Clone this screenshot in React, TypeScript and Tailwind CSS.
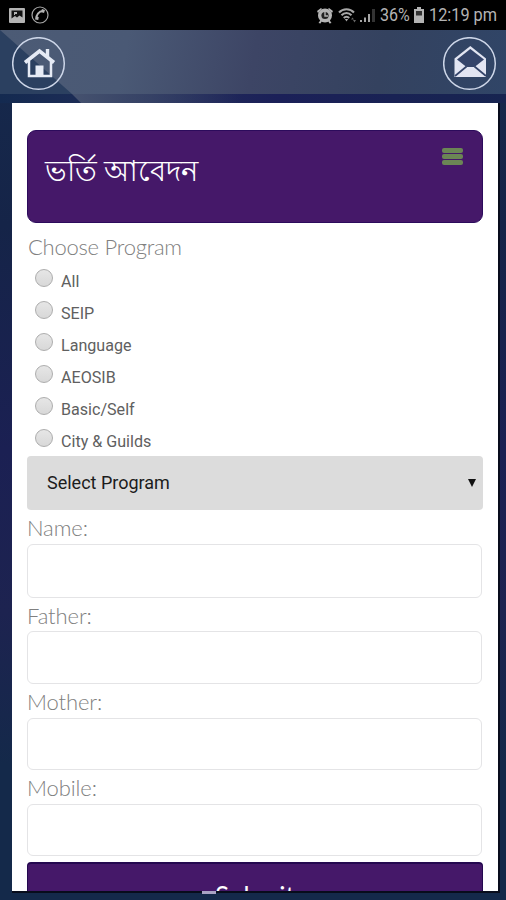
import { useState } from "react";

const programs = [
  "All",
  "SEIP",
  "Language",
  "AEOSIB",
  "Basic/Self",
  "City & Guilds",
];

const fields = [
  { label: "Name:", labelBox: "h-[34px] pt-[4px]", inputBox: "h-[54px]" },
  { label: "Father:", labelBox: "h-[33px] pt-[4px]", inputBox: "h-[53px]" },
  { label: "Mother:", labelBox: "h-[34px] pt-[4px]", inputBox: "h-[52px]" },
  { label: "Mobile:", labelBox: "h-[34px] pt-[4px]", inputBox: "h-[52px]" },
];

function StatusBar() {
  return (
    <div className="flex h-[30px] items-center justify-between bg-black pl-[9px] pr-[9px] text-[#b4b4b4]">
      <div className="flex items-center gap-[6px]">
        <svg width="16" height="15" viewBox="0 0 16 15">
          <rect width="16" height="15" rx="1" fill="#b4b4b4" />
          <path d="M2.500 2.500h11v7l-3-2-2.500 2-2-1.500-3.500 2.500z" fill="#111" />
          <path d="M5 4h3v2H6v1H5z" fill="#b4b4b4" />
        </svg>
        <svg width="18" height="18" viewBox="0 0 18 18" fill="none">
          <circle cx="9" cy="9" r="8" stroke="#a6a6a6" strokeWidth="1.200" />
          <path
            d="M5.500 13c-.8-4 2.500-7.800 6.500-8"
            stroke="#b4b4b4"
            strokeWidth="2"
          />
          <path d="M10.500 4.500l3 1M4.500 12l3 .5" stroke="#b4b4b4" strokeWidth="3" />
        </svg>
      </div>
      <div className="flex items-center">
        {/* alarm */}
        <svg width="16" height="17" viewBox="0 0 16 17" fill="#b4b4b4">
          <circle cx="8" cy="8.500" r="7" />
          <path d="M0 4l4-3 1 1-4 4zM16 4l-4-3-1 1 4 4zM1.500 16l2-3 1.500 1L3.500 16.500zM14.500 16l-2-3-1.500 1 1.500 2.500z" />
          <circle cx="8" cy="8.500" r="3.600" fill="#222" />
          <path d="M8 5v4h3" stroke="#b4b4b4" strokeWidth="1.400" fill="none" />
        </svg>
        {/* wifi */}
        <svg className="ml-[5px]" width="19" height="17" viewBox="0 0 19 17" fill="none">
          <g stroke="#a6a6a6" strokeWidth="2">
            <path d="M1 5.500c4-4.500 11-4.500 15 0" />
            <path d="M3.500 8.300c2.800-3 7.200-3 10 0" />
            <path d="M5.800 11c1.500-1.700 3.900-1.700 5.400 0" />
          </g>
          <path d="M6.800 12l1.700 2.500 1.700-2.500z" fill="#a6a6a6" />
          <path d="M13 12.500l1.500-2 1.500 2zM15 13l1.500 2.500 1.500-2.500z" fill="#666" />
        </svg>
        {/* signal */}
        <svg className="ml-[3px]" width="16" height="14" viewBox="0 0 16 14">
          <path d="M0 12h2v2H0zM4 9.500h2V14H4zM8 6h2v8H8z" fill="#a6a6a6" />
          <path d="M12 1h3v13h-3z" fill="#333" />
        </svg>
        <span className="ml-[4px] w-[30px] origin-left scale-x-[0.89] whitespace-nowrap text-[18px] leading-[30px]">
          36%
        </span>
        <svg className="ml-[4px]" width="10" height="16" viewBox="0 0 10 16">
          <path d="M3 0h4v2h3v14H0V2h3z" fill="#b4b4b4" />
          <path d="M2 4h6v4.500H2z" fill="#333" />
        </svg>
        <span className="ml-[5px] w-[68px] origin-left scale-x-[0.905] whitespace-nowrap text-[18px] leading-[30px]">
          12:19 pm
        </span>
      </div>
    </div>
  );
}

function Header() {
  return (
    <div className="relative h-[73px] bg-[linear-gradient(90deg,#142a50_0%,#222d5a_30%,#1b2058_55%,#172450_100%)]">
      <div className="h-[64px] bg-[linear-gradient(100deg,#4c5b75_0%,#4a5975_25%,#3d4565_50%,#34425f_75%,#304567_100%)]"></div>
      <svg className="absolute left-0 top-0" width="506" height="73" viewBox="0 0 506 73">
        <defs>
          <linearGradient id="glare" x1="0" x2="1" y1="0" y2="0">
            <stop offset="0" stopColor="#46526f" />
            <stop offset="1" stopColor="#46526f" stopOpacity="0" />
          </linearGradient>
        </defs>
        <path d="M0 0L72 64H0z" fill="#2b4060" />
        <path d="M72 64h170v9H81z" fill="url(#glare)" />
      </svg>
      <button className="absolute left-[12px] top-[7px]">
        <svg width="54" height="54" viewBox="0 0 54 54" fill="none">
          <circle cx="26.500" cy="26.500" r="25.800" stroke="#cdd6e8" strokeWidth="1.500" />
          <g stroke="#e6ebf5">
            <path d="M13 25.500L27.500 14L42 25.500" strokeWidth="3.600" />
            <path d="M17 24v15h22V24" strokeWidth="2.500" />
            <path d="M35.500 12v8" strokeWidth="3.400" />
          </g>
          <path d="M23.500 28.500h8V39h-8z" fill="#e6ebf5" />
        </svg>
      </button>
      <button className="absolute right-[9px] top-[7px]">
        <svg width="54" height="54" viewBox="0 0 54 54" fill="none">
          <circle cx="26.500" cy="26.500" r="25.800" stroke="#cdd6e8" strokeWidth="1.500" />
          <path d="M11.500 21.500L27.300 9L43 21.500V40H11.500z" fill="#e2e5f2" />
          <path d="M14 22.500L27.300 12L41 22.500L31.500 30h-8z" fill="#34446a" />
          <path d="M12 39L23.500 29.500M31.500 29.500L43 39" stroke="#34446a" strokeWidth="1.700" />
        </svg>
      </button>
    </div>
  );
}

export default function App() {
  const [program, setProgram] = useState("");
  return (
    <div className="relative h-[900px] w-[506px] overflow-hidden bg-[linear-gradient(180deg,#172b4d_0%,#152448_25%,#1b2053_50%,#1d2350_68%,#14294a_85%,#14294a_100%)] font-['Roboto','Noto_Sans',sans-serif]">
      <StatusBar />
      <Header />

      <div className="ml-[12px] h-[788px] w-[486px] overflow-hidden bg-white px-[15px] pt-[27px] shadow-[1px_1px_0_1px_#080c1c]">
        {/* Title card */}
        <div className="flex h-[93px] w-[456px] justify-between rounded-[9px] border border-[#2c0b5c] bg-[#451869] pl-[17px] pr-[19px]">
          <h1 className="mt-[20px] whitespace-nowrap text-[29.300px] font-medium leading-[40px] text-white">
            ভর্তি আবেদন
          </h1>
          <div className="mt-[17px] flex h-[18px] w-[21px] flex-col gap-[1px]">
            <p className="h-[5px] rounded-xs bg-[#6b8555]"></p>
            <p className="h-[5px] rounded-xs bg-[#6b8555]"></p>
            <p className="h-[5px] rounded-xs bg-[#6b8555]"></p>
          </div>
        </div>

        {/* Program list */}
        <p className="h-[39px] pl-px pt-[10px] font-['Lato',sans-serif] text-[22px] font-light leading-[28px] tracking-[-0.25px] text-[#808080]">
          Choose Program
        </p>
        <div className="h-[194px]">
          {programs.map((name) => (
            <div
              className="flex h-[32px] cursor-pointer items-start pl-[8px]"
              key={name}
              onClick={() => setProgram(name)}
            >
              <div className="mt-[7px] flex h-[18px] w-[18px] items-center justify-center rounded-full border-[1.5px] border-[#adadad] bg-[linear-gradient(180deg,#e6e6e6,#d8d8d8)]">
                {program === name && (
                  <p className="h-2 w-2 rounded-full bg-[#555]"></p>
                )}
              </div>
              <p className="ml-[8px] mt-[8px] whitespace-nowrap text-[16.100px] leading-[24px] text-[#606060]">
                {name}
              </p>
            </div>
          ))}
        </div>
        <div className="flex h-[54px] w-[456px] items-center justify-between rounded-[4px] bg-[#dcdcdc] pl-[20px] pr-[7px] text-[18px] text-[#1c1c1c]">
          <p className="pb-px">Select Program</p>
          <svg width="8" height="8" viewBox="0 0 8 8">
            <path d="M0 0h8L4 8z" fill="#111" />
          </svg>
        </div>

        {/* Student info */}
        {fields.map((field) => (
          <div key={field.label}>
            <p
              className={`${field.labelBox} font-['Lato',sans-serif] text-[22px] font-light leading-[28px] tracking-[-0.1px] text-[#808080]`}
            >
              {field.label}
            </p>
            <input
              className={`${field.inputBox} block w-[455px] rounded-[6px] border-[1.5px] border-[#e4e4e6] bg-white px-4 outline-none`}
            />
          </div>
        ))}

        <button className="mt-[6px] block h-[60px] w-[456px] rounded-[4px] border border-t-2 border-[#24084f] bg-[#451869] pb-[2px] text-center font-['Lato',sans-serif] text-[26px] leading-[32px] text-white">
          <p className="mt-[9px]">Submit</p>
        </button>
      </div>

      <div className="absolute left-[202px] top-[891px] h-[3px] w-[14px] bg-[#a9a3c4]"></div>
    </div>
  );
}
